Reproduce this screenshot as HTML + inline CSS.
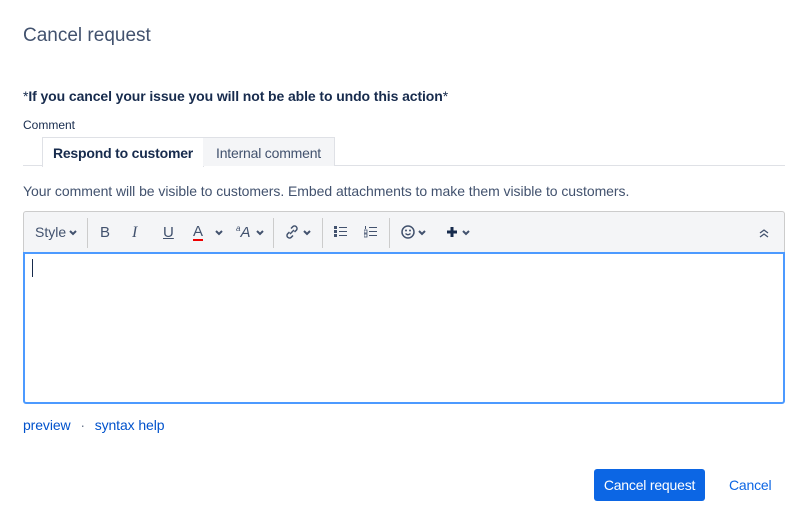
<!DOCTYPE html>
<html><head><style>
body{margin:0;width:804px;height:520px;background:#fff;font-family:"Liberation Sans",sans-serif;color:#172b4d;position:relative;overflow:hidden}
.a{position:absolute;white-space:nowrap}
.tb{position:absolute;left:23px;top:211px;width:760px;height:40px;background:#f4f5f7;border:1px solid #ccc;border-bottom:none;border-radius:3px 3px 0 0}
.ic{position:absolute;top:12px;font-size:15px;color:#42526e}
.sep{position:absolute;top:6px;width:1px;height:30px;background:#ccc}
svg.c{position:absolute;top:18px}
</style></head><body>
<div class="a" style="left:23px;top:25px;font-size:19px;color:#42526e">Cancel request</div>
<div class="a" style="left:23px;top:88px;font-size:14px;font-weight:bold;letter-spacing:-0.1px"><span style="font-weight:normal">*</span>If you cancel your issue you will not be able to undo this action<span style="font-weight:normal">*</span></div>
<div class="a" style="left:23px;top:118px;font-size:12px">Comment</div>
<div class="a" style="left:23px;top:165px;width:762px;height:1px;background:#dfe1e6"></div>
<div class="a" style="left:42px;top:137px;width:160px;height:29px;background:#fff;border:1px solid #dfe1e6;border-bottom:none;font-size:14px;font-weight:bold;text-align:center;line-height:30px;letter-spacing:-0.2px">Respond to customer</div>
<div class="a" style="left:203px;top:137px;width:131px;height:28px;background:#f4f5f7;border:1px solid #dfe1e6;border-bottom:none;border-left:none;font-size:14px;color:#42526e;text-align:center;line-height:30px;letter-spacing:-0.2px">Internal comment</div>
<div class="a" style="left:23px;top:183px;font-size:14px;color:#42526e;letter-spacing:-0.05px">Your comment will be visible to customers. Embed attachments to make them visible to customers.</div>
<div class="tb">
<span class="ic" style="left:11px;font-size:14px">Style</span>
<svg class="c" style="left:45px" width="8" height="6"><path d="M1 1l3 3 3-3" stroke="#42526e" stroke-width="2" fill="none"/></svg>
<div class="sep" style="left:63px"></div>
<span class="ic" style="left:76px">B</span>
<span class="ic" style="left:108px;font-style:italic;font-family:'Liberation Serif',serif;font-size:16px">I</span>
<span class="ic" style="left:139px;text-decoration:underline">U</span>
<span class="ic" style="left:169px;border-bottom:2px solid #e00;line-height:15px">A</span>
<svg class="c" style="left:191px" width="8" height="6"><path d="M1 1l3 3 3-3" stroke="#42526e" stroke-width="2" fill="none"/></svg>
<span class="ic" style="left:212px;font-style:italic"><sup style="font-size:8px">a</sup>A</span>
<svg class="c" style="left:232px" width="8" height="6"><path d="M1 1l3 3 3-3" stroke="#42526e" stroke-width="2" fill="none"/></svg>
<div class="sep" style="left:249px"></div>
<svg style="position:absolute;left:260px;top:12px" width="16" height="16" viewBox="0 0 16 16"><path d="M7 4.5l2-2a2.5 2.5 0 013.5 3.5l-2 2M9 11.5l-2 2a2.5 2.5 0 01-3.5-3.5l2-2M6 10l4-4" stroke="#42526e" stroke-width="1.5" fill="none"/></svg>
<svg class="c" style="left:279px" width="8" height="6"><path d="M1 1l3 3 3-3" stroke="#42526e" stroke-width="2" fill="none"/></svg>
<div class="sep" style="left:298px"></div>
<svg style="position:absolute;left:310px;top:13px" width="14" height="13"><g fill="#42526e"><rect x="0" y="1" width="3" height="3"/><rect x="0" y="5" width="3" height="3"/><rect x="0" y="9" width="3" height="3"/><rect x="5" y="2" width="8" height="1"/><rect x="5" y="6" width="8" height="1"/><rect x="5" y="10" width="8" height="1"/></g></svg>
<svg style="position:absolute;left:340px;top:13px" width="14" height="13"><g fill="#42526e"><rect x="1" y="1" width="1" height="3"/><rect x="0" y="5" width="3" height="3" fill="none" stroke="#42526e" stroke-width=".8"/><rect x="0" y="9" width="3" height="3" fill="none" stroke="#42526e" stroke-width=".8"/><rect x="5" y="2" width="8" height="1"/><rect x="5" y="6" width="8" height="1"/><rect x="5" y="10" width="8" height="1"/></g></svg>
<div class="sep" style="left:365px"></div>
<svg style="position:absolute;left:377px;top:13px" width="14" height="14"><circle cx="7" cy="7" r="6" stroke="#42526e" stroke-width="1.5" fill="none"/><circle cx="5" cy="5.5" r="1" fill="#42526e"/><circle cx="9" cy="5.5" r="1" fill="#42526e"/><path d="M4.5 8.5q2.5 2.5 5 0" stroke="#42526e" stroke-width="1.3" fill="none"/></svg>
<svg class="c" style="left:394px" width="8" height="6"><path d="M1 1l3 3 3-3" stroke="#42526e" stroke-width="2" fill="none"/></svg>
<svg style="position:absolute;left:422px;top:14px" width="12" height="12"><path d="M6 1v10M1 6h10" stroke="#172b4d" stroke-width="3"/></svg>
<svg class="c" style="left:438px" width="8" height="6"><path d="M1 1l3 3 3-3" stroke="#42526e" stroke-width="2" fill="none"/></svg>
<svg style="position:absolute;left:735px;top:17px" width="10" height="9"><path d="M1 4l4-3 4 3M1 8l4-3 4 3" stroke="#42526e" stroke-width="1.3" fill="none"/></svg>
</div>
<div class="a" style="left:23px;top:252px;width:758px;height:148px;border:2px solid #4c9aff;border-radius:0 0 3px 3px"></div>
<div class="a" style="left:32px;top:259px;width:1px;height:18px;background:#172b4d"></div>
<div class="a" style="left:23px;top:417px;font-size:14px;color:#0052cc;letter-spacing:-0.1px">preview <span style="color:#6b778c;margin:0 6px">·</span> syntax help</div>
<div class="a" style="left:594px;top:469px;width:111px;height:32px;background:#0c66e4;border-radius:3px;color:#fff;font-size:14px;text-align:center;line-height:32px;letter-spacing:-0.2px">Cancel request</div>
<div class="a" style="left:729px;top:477px;font-size:14px;color:#0c66e4;letter-spacing:-0.2px">Cancel</div>
</body></html>
